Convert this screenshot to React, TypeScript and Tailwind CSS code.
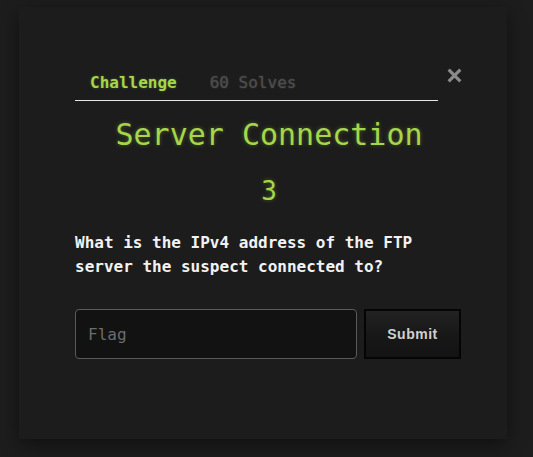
export default function App() {
  return (
    <div className="min-h-[457px] w-[533px] bg-[#1d1d1d] pt-[7px] pl-[19px] font-['DejaVu_Sans_Mono',monospace]">
      <div className="h-[432px] w-[488px] bg-[#1c1c1c] pl-[56px] pt-[57px] shadow-[0_6px_18px_rgba(0,0,0,0.45)]">
        <div className="flex w-[388px] items-start">
          <div className="flex h-[37px] w-[363px] items-start gap-[33px] border-b border-[#e6e6e6] pl-[15px] pt-[9px] text-[16px] leading-[20px]">
            <span className="font-bold text-[#a6d64a] [text-shadow:0_0_3px_rgba(166,214,74,0.3)]">Challenge</span>
            <span className="text-[#4e4e4e] [text-shadow:0_0_2px_rgba(110,110,110,0.45)]">60 Solves</span>
          </div>
          <button className="ml-auto mt-[3px] text-[#8a8a8a]">
            <svg width="17" height="17" viewBox="0 0 16 16" fill="none">
              <path d="M2.5 2.5 L13.5 13.5 M13.5 2.5 L2.5 13.5" stroke="currentColor" strokeWidth="3" />
            </svg>
          </button>
        </div>

        <h1 className="mt-[14px] w-[388px] text-center text-[30px] leading-[40px] text-[#a6d64a] [text-shadow:0_0_4px_rgba(166,214,74,0.35)]">
          Server Connection
        </h1>
        <div className="mt-[19px] w-[388px] text-center text-[26px] leading-[34px] text-[#a6d64a] [text-shadow:0_0_4px_rgba(166,214,74,0.35)]">
          3
        </div>

        <p className="mt-[23px] w-[388px] text-[16px] font-bold leading-[24px] text-[#f2f2f2]">
          What is the IPv4 address of the FTP server the suspect connected to?
        </p>

        <div className="mt-[30px] flex items-start gap-[7px]">
          <input
            placeholder="Flag"
            className="h-[50px] w-[282px] rounded-[4px] border border-[#5a5a5a] bg-[#121212] px-[12px] text-[16px] text-[#cccccc] placeholder:text-[#6c6c6c] focus:outline-none"
          />
          <button className="h-[50px] w-[97px] border-2 border-[#050505] bg-[linear-gradient(#222222,#181818_50%,#131313)] font-['Liberation_Sans',sans-serif] text-[14px] font-bold tracking-[0.5px] text-[#d0d0d0]">
            Submit
          </button>
        </div>
      </div>
    </div>
  );
}
